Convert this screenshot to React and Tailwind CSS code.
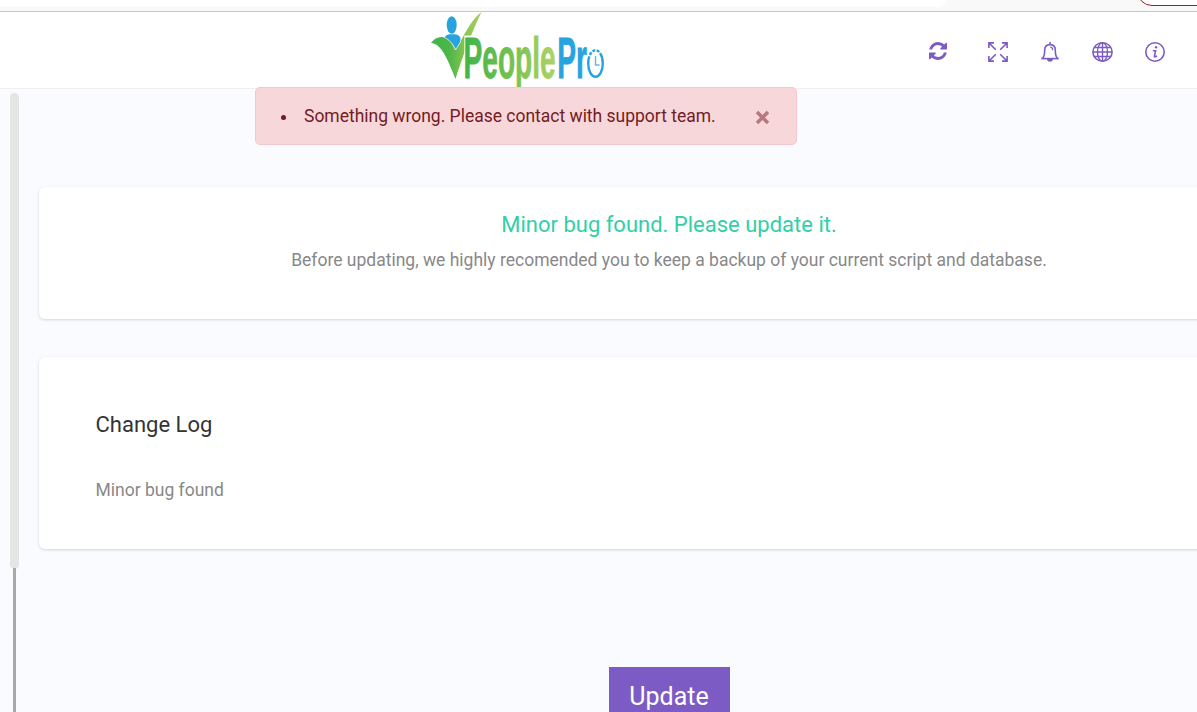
import React from "react";

function Logo() {
  return (
    <svg width="180" height="76" viewBox="0 0 180 76" className="block overflow-visible" aria-label="People Pro">
      <defs>
        <linearGradient id="word" gradientUnits="userSpaceOnUse" x1="0" y1="0" x2="190" y2="0">
          <stop offset="0" stopColor="#3fb549" />
          <stop offset="0.5" stopColor="#74c04f" />
          <stop offset="1" stopColor="#aed465" />
        </linearGradient>
        <linearGradient id="tick" x1="0" y1="0" x2="1" y2="0">
          <stop offset="0" stopColor="#3fb549" />
          <stop offset="0.35" stopColor="#4db648" />
          <stop offset="0.7" stopColor="#8bc653" />
          <stop offset="1" stopColor="#a6d05b" />
        </linearGradient>
      </defs>
      <ellipse cx="23.7" cy="13" rx="5" ry="8.8" fill="#27a3df" />
      <path d="M16.500 26C18 22 22 22.300 24 22.300S31 22 32.500 26L32 32L28 38C25 32 20 27 16.500 26Z" fill="#27a3df" />
      <path d="M3 31C9 22 22 22 27.500 38C35 26 43 7 53.5 0C45 17 34 46 27.500 67C21 51 14 31 3 31Z" fill="url(#tick)" />
      <path d="M16 25.500C21 27 25 32 27.500 38L33 29" fill="none" stroke="#fff" strokeWidth=".7" />
      <path d="M36.300 67V23.500H47L54 27V67Z" fill="#fff" />
      <g fontFamily="'Liberation Sans', sans-serif" fontWeight="700" fontSize="58">
        <g transform="translate(35.500 65.600) scale(.485 1)">
          <text x="0" y="0" fill="url(#word)" stroke="url(#word)" strokeWidth=".8">People</text>
        </g>
        <g transform="translate(129.300 65.600) scale(.485 1)">
          <text x="0" y="0" fill="#27a3df" stroke="#27a3df" strokeWidth=".8">Pr</text>
        </g>
      </g>
      <ellipse cx="167.500" cy="51.500" rx="7.300" ry="13.300" fill="#fff" stroke="#27a3df" strokeWidth="2.400" strokeDasharray="40 1.500 3 1.500 3 1.500 3 1.500 30" />
      <path d="M167.500 44V53H171.500" fill="none" stroke="#5dbae6" strokeWidth="1.400" />
    </svg>
  );
}

function Refresh() {
  return (
    <svg width="18" height="18" viewBox="0 0 1536 1536" fill="currentColor">
      <path d="M1511 928q0 5-1 7-64 268-268 434.500T764 1536q-146 0-282.500-55T238 1324l-129 129q-19 19-45 19t-45-19-19-45V960q0-26 19-45t45-19h448q26 0 45 19t19 45-19 45l-137 137q71 66 161 102t187 36q134 0 250-65t186-179q11-17 53-117 8-23 30-23h192q13 0 22.500 9.500t9.500 22.500zm25-800v448q0 26-19 45t-45 19h-448q-26 0-45-19t-19-45 19-45l138-138Q969 256 768 256q-134 0-250 65T332 500q-11 17-53 117-8 23-30 23H50q-13 0-22.500-9.500T18 608v-7q65-268 270-434.500T768 0q146 0 284 55.500T1297 212l130-129q19-19 45-19t45 19 19 45z" />
    </svg>
  );
}

const line = { fill: "none", stroke: "currentColor", strokeWidth: 1.5 };

function Expand() {
  return (
    <svg width="20" height="20" viewBox="0 0 20 20" {...line} strokeWidth={1.6}>
      <path d="M.9 6V.9H6M1 1L7.800 7.800M14 .9H19.100V6M19 1L12.200 7.800M.9 14V19.100H6M1 19L7.800 12.200M19.100 14V19.100H14M19 19L12.200 12.200" />
    </svg>
  );
}

function Bell() {
  return (
    <svg width="18" height="20" viewBox="0 0 18 20" {...line} strokeWidth={1.6}>
      <path d="M9 0V2.500M1.500 16.300C3.700 14.500 3.700 11 3.700 8C3.700 4.500 6 2.600 9 2.600S14.300 4.500 14.300 8C14.300 11 14.300 14.500 16.500 16.300" />
      <path d="M.2 16.600H17.800" />
      <path d="M6.800 17C7 19.700 11 19.700 11.200 17Z" fill="currentColor" />
      <path d="M9.300 5.200C11 5.200 11.700 6.400 11.700 8.200" strokeWidth="1.2" />
    </svg>
  );
}

function Globe() {
  return (
    <svg width="21" height="20" viewBox="0 0 21 20" {...line} strokeWidth={1.4}>
      <ellipse cx="10.500" cy="10" rx="9.600" ry="9.200" strokeWidth="1.6" />
      <ellipse cx="10.500" cy="10" rx="5" ry="9.200" />
      <path d="M10.500 1V19M1 10H20M2.500 5.500H18.500M2.500 14.500H18.500" />
    </svg>
  );
}

function Info() {
  return (
    <svg width="20" height="20" viewBox="0 0 20 20" {...line}>
      <circle cx="10" cy="10" r="9.200" strokeWidth="1.600" />
      <circle cx="11" cy="5.300" r="1.200" fill="currentColor" stroke="none" />
      <path d="M7.800 8.800H10.600L9.400 14.200C9.200 15.200 10.300 15.100 12 13.900" strokeWidth="1.6" />
    </svg>
  );
}

export default function App() {
  return (
    <div className="relative flex h-[712px] w-[1197px] flex-col overflow-hidden bg-[#fafbff] font-['Roboto',sans-serif] text-[17.5px] text-[#888]">
      <div className="flex h-3 shrink-0 items-start justify-between overflow-hidden border-b border-[#c6c6c6] bg-[#f9f9f9]">
        <div className="h-[7px] w-[946px] rounded-br-[12px] bg-white" />
        <div className="-mt-6 h-[30px] w-[80px] -mr-5 rounded-[15px] border border-[#a51d24] bg-white" />
      </div>

      <header className="flex h-[77px] shrink-0 items-start justify-between border-b border-[#efeff1] bg-white pl-[428px] pr-[32px]">
        <Logo />
        <nav className="flex h-[76px] items-center pt-1 text-[#7c5cc4]">
          <button className="mr-[41px] mb-[3px]"><Refresh /></button>
          <button className="mr-[33px]"><Expand /></button>
          <button className="mr-[33px]"><Bell /></button>
          <button className="mr-[32px]"><Globe /></button>
          <button><Info /></button>
        </nav>
      </header>

      <div role="alert" className="absolute left-[255px] top-[87px] flex h-[58px] w-[542px] items-center rounded-[5px] border border-[#f5c6cb] bg-[#f8d7da] pl-[25px] pr-[26px] text-[#721c24]">
        <span className="mt-[3px] mr-[18px] size-[5px] rounded-full bg-[#721c24]" />
        <span className="grow tracking-[-0.01px]">Something wrong. Please contact with support team.</span>
        <svg width="15" height="15" viewBox="0 0 15 15" className="mt-[3px] text-[#b77980]">
          <path d="M2 2L13 13M13 2L2 13" stroke="currentColor" strokeWidth="3.500" />
        </svg>
      </div>

      <div className="flex min-h-0 grow">
        <div className="flex w-[39px] shrink-0 flex-col pl-[10px] pt-1">
          <div className="h-[476px] w-[9px] shrink-0 rounded-full bg-[#e3e6e5]" />
          <div className="-mt-px ml-[3px] w-[3px] grow bg-[#a9a9ab]" />
        </div>
        <main className="flex w-[1260px] shrink-0 flex-col pt-[98px]">
          <section className="flex h-[132px] shrink-0 flex-col items-center rounded-[6px] bg-white pt-[23px] shadow-[0_1px_3px_rgba(0,0,0,0.16)]">
            <h4 className="text-[22px] leading-[30px] text-[#33cfa5]">Minor bug found. Please update it.</h4>
            <p className="mt-[7px] leading-[26px]">Before updating, we highly recomended you to keep a backup of your current script and database.</p>
          </section>
          <section className="mt-[38px] h-[192px] shrink-0 rounded-[6px] bg-white pl-[56.5px] pt-[53px] shadow-[0_1px_3px_rgba(0,0,0,0.16)]">
            <h4 className="text-[22px] leading-[30px] text-[#333]">Change Log</h4>
            <p className="mt-[37px] leading-[26px]">Minor bug found</p>
          </section>
          <button className="mt-[118px] h-[58px] w-[121px] shrink-0 self-center bg-[#7c5cc4] pt-0.5 text-[25px] text-white">Update</button>
        </main>
      </div>
    </div>
  );
}
